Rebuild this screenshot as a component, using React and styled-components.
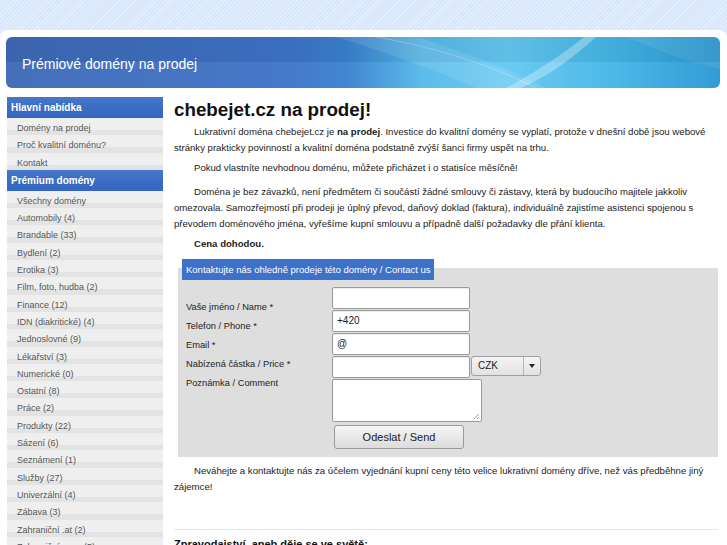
import styled, { createGlobalStyle } from "styled-components"

const GlobalStyle = createGlobalStyle`
  html, body {
    margin: 0;
    padding: 0;
  }
  body {
    font-family: "Liberation Sans", Arial, sans-serif;
    background-color: #d8e7fb;
    background-image: repeating-linear-gradient(
      135deg,
      rgba(255, 255, 255, 0.35) 0px,
      rgba(255, 255, 255, 0.35) 1px,
      transparent 1px,
      transparent 3px
    );
    overflow: hidden;
  }
`

const TopBand = styled.div`
  height: 30px;
`

const Page = styled.div`
  background: #fff;
  border-radius: 8px 8px 0 0;
  padding: 7px 7px 0 6px;
  min-height: 520px;
`

const Banner = styled.div`
  height: 51px;
  border-radius: 6px;
  display: flex;
  align-items: center;
  padding-left: 16px;
  position: relative;
  overflow: hidden;
  background:
    linear-gradient(180deg, rgba(0, 0, 0, 0.05) 0%, rgba(0, 0, 0, 0.05) 50%, rgba(255, 255, 255, 0.04) 50%, rgba(255, 255, 255, 0.04) 100%),
    linear-gradient(90deg, #3f69b6 0%, #3d74c9 40%, #3a82cf 48%, #55b8ea 58%, #66c9f2 70%, #45b6e8 85%, #2a97d2 100%);
`

const BannerTitle = styled.h1`
  margin: 0;
  color: #fff;
  font-weight: normal;
  font-size: 14px;
  position: relative;
  z-index: 1;
  margin-top: 2px;
`

const Swoosh = styled.svg`
  position: absolute;
  left: 0;
  top: 0;
`

const Columns = styled.div`
  display: flex;
  gap: 11px;
  margin-top: 9px;
  padding-left: 1px;
`

const Sidebar = styled.div`
  width: 156px;
  flex-shrink: 0;
`

const MenuHead = styled.div`
  height: 21px;
  line-height: 21px;
  padding-left: 4px;
  color: #fff;
  font-weight: bold;
  font-size: 10px;
  background: linear-gradient(180deg, #4577cc 0%, #3a6cc4 55%, #3567c0 100%);
`

const MenuItem = styled.div`
  height: 17.3px;
  line-height: 21px;
  padding-left: 10px;
  font-size: 9px;
  color: #555;
  overflow: visible;
  background: linear-gradient(180deg, #efefef 0%, #efefef 68%, #e3e3e3 68%, #e3e3e3 100%);
`

const Main = styled.div`
  flex: 1;
  font-size: 9.6px;
  color: #222;
`

const Title = styled.h2`
  margin: 1px 0 0;
  font-size: 18.8px;
  font-weight: bold;
  color: #111;
  line-height: 24px;
`

const Para = styled.p`
  margin: ${(p) => p.$top || 4}px 0 0;
  line-height: 16px;
  text-indent: 20px;
`

const FormBox = styled.div`
  margin: 16px 2px 0 4px;
  background: #dedede;
  padding: 0 0 8px;
`

const Tab = styled.div`
  display: inline-block;
  position: relative;
  top: -9px;
  margin-left: 4px;
  background: #3e72c9;
  color: #fff;
  font-size: 9.5px;
  height: 21px;
  line-height: 21px;
  padding: 0 4px;
  width: 252px;
  box-sizing: border-box;
  white-space: nowrap;
`

const FormGrid = styled.div`
  display: flex;
  margin-top: -2px;
`

const Labels = styled.div`
  width: 154px;
  padding-left: 8px;
  padding-top: 11px;
  box-sizing: border-box;
`

const Label = styled.div`
  line-height: 19px;
  height: 19px;
  font-size: 9.3px;
  color: #222;
`

const Fields = styled.div`
  display: flex;
  flex-direction: column;
  gap: 1px;
`

const Row = styled.div`
  display: flex;
  gap: 1px;
`

const Input = styled.div`
  width: 138px;
  height: 22px;
  box-sizing: border-box;
  background: #fff;
  border: 1px solid #9a9a9a;
  border-radius: 2px;
  box-shadow: inset 0 1px 1px rgba(0, 0, 0, 0.08);
  font-size: 10px;
  line-height: 20px;
  padding-left: 4px;
  color: #222;
`

const TextArea = styled.div`
  width: 150px;
  height: 43px;
  box-sizing: border-box;
  background: #fff;
  border: 1px solid #9a9a9a;
  border-radius: 2px;
  position: relative;
`

const Grip = styled.svg`
  position: absolute;
  right: 1px;
  bottom: 1px;
`

const Select = styled.div`
  width: 70px;
  height: 20px;
  box-sizing: border-box;
  border: 1px solid #a0a0a0;
  border-radius: 3px;
  background: linear-gradient(180deg, #f4f4f4 0%, #e2e2e2 100%);
  display: flex;
  font-size: 10px;
  color: #222;
`

const SelectText = styled.div`
  flex: 1;
  line-height: 18px;
  padding-left: 6px;
`

const SelectArrow = styled.div`
  width: 16px;
  border-left: 1px solid #b5b5b5;
  display: flex;
  align-items: center;
  justify-content: center;
  &::after {
    content: "";
    border-left: 3px solid transparent;
    border-right: 3px solid transparent;
    border-top: 4px solid #222;
  }
`

const Button = styled.div`
  width: 130px;
  height: 24px;
  box-sizing: border-box;
  margin: 2px 0 0 2px;
  border: 1px solid #9a9a9a;
  border-radius: 3px;
  background: linear-gradient(180deg, #f5f5f5 0%, #dcdcdc 100%);
  font-size: 11px;
  line-height: 22px;
  text-align: center;
  color: #222;
`

const Separator = styled.div`
  border-top: 1px solid #e6e6e6;
  margin-top: 34px;
  margin-right: 2px;
`

const NewsHead = styled.h3`
  margin: 8px 0 0;
  font-size: 11px;
  font-weight: bold;
  color: #111;
`

const mainMenu = ["Domény na prodej", "Proč kvalitní doménu?", "Kontakt"]

const premium = [
  "Všechny domény",
  "Automobily (4)",
  "Brandable (33)",
  "Bydlení (2)",
  "Erotika (3)",
  "Film, foto, hudba (2)",
  "Finance (12)",
  "IDN (diakritické) (4)",
  "Jednoslovné (9)",
  "Lékařství (3)",
  "Numerické (0)",
  "Ostatní (8)",
  "Práce (2)",
  "Produkty (22)",
  "Sázení (6)",
  "Seznámení (1)",
  "Služby (27)",
  "Univerzální (4)",
  "Zábava (3)",
  "Zahraniční .at (2)",
  "Zahraniční .com (5)",
]

const labels = [
  "Vaše jméno / Name *",
  "Telefon / Phone *",
  "Email *",
  "Nabízená částka / Price *",
  "Poznámka / Comment",
]

const App = () => {
  return (
    <>
      <GlobalStyle />
      <TopBand />
      <Page>
        <Banner>
          <Swoosh width="714" height="51" viewBox="0 0 714 51">
            <path d="M330 0 C390 18 440 38 470 51 L540 51 C500 30 450 12 410 0 Z" fill="rgba(255,255,255,0.10)" />
            <path d="M500 51 C530 35 560 15 578 0 L590 0 C570 18 545 38 515 51 Z" fill="rgba(255,255,255,0.30)" />
            <path d="M370 0 C430 10 490 30 530 51" stroke="rgba(255,255,255,0.25)" fill="none" />
            <path d="M620 0 C650 12 680 25 714 32 L714 0 Z" fill="rgba(255,255,255,0.08)" />
          </Swoosh>
          <BannerTitle>Prémiové domény na prodej</BannerTitle>
        </Banner>
        <Columns>
          <Sidebar>
            <MenuHead>Hlavní nabídka</MenuHead>
            {mainMenu.map((m) => (
              <MenuItem key={m}>{m}</MenuItem>
            ))}
            <MenuHead>Prémium domény</MenuHead>
            {premium.map((m) => (
              <MenuItem key={m}>{m}</MenuItem>
            ))}
          </Sidebar>
          <Main>
            <Title>chebejet.cz na prodej!</Title>
            <Para $top={2}>
              Lukrativní doména chebejet.cz je <b>na prodej</b>. Investice do kvalitní domény se vyplatí, protože v dnešní době jsou webové stránky prakticky povinností a kvalitní doména podstatně zvýší šanci firmy uspět na trhu.
            </Para>
            <Para>Pokud vlastníte nevhodnou doménu, můžete přicházet i o statisíce měsíčně!</Para>
            <Para $top={8}>
              Doména je bez závazků, není předmětem či součástí žádné smlouvy či zástavy, která by budoucího majitele jakkoliv omezovala. Samozřejmostí při prodeji je úplný převod, daňový doklad (faktura), individuálně zajistíme asistenci spojenou s převodem doménového jména, vyřešíme kupní smlouvu a případně další požadavky dle přání klienta.
            </Para>
            <Para>
              <b>Cena dohodou.</b>
            </Para>
            <FormBox>
              <Tab>Kontaktujte nás ohledně prodeje této domény / Contact us</Tab>
              <FormGrid>
                <Labels>
                  {labels.map((l) => (
                    <Label key={l}>{l}</Label>
                  ))}
                </Labels>
                <Fields>
                  <Input />
                  <Input>+420</Input>
                  <Input>@</Input>
                  <Row>
                    <Input />
                    <Select>
                      <SelectText>CZK</SelectText>
                      <SelectArrow />
                    </Select>
                  </Row>
                  <TextArea>
                    <Grip width="7" height="7" viewBox="0 0 7 7">
                      <path d="M6 1 L1 6 M6 4 L4 6" stroke="#888" strokeWidth="0.8" />
                    </Grip>
                  </TextArea>
                  <Button>Odeslat / Send</Button>
                </Fields>
              </FormGrid>
            </FormBox>
            <Para $top={6}>
              Neváhejte a kontaktujte nás za účelem vyjednání kupní ceny této velice lukrativní domény dříve, než vás předběhne jiný zájemce!
            </Para>
            <Separator />
            <NewsHead>Zpravodajství, aneb děje se ve světě:</NewsHead>
          </Main>
        </Columns>
      </Page>
    </>
  )
}

export default App
